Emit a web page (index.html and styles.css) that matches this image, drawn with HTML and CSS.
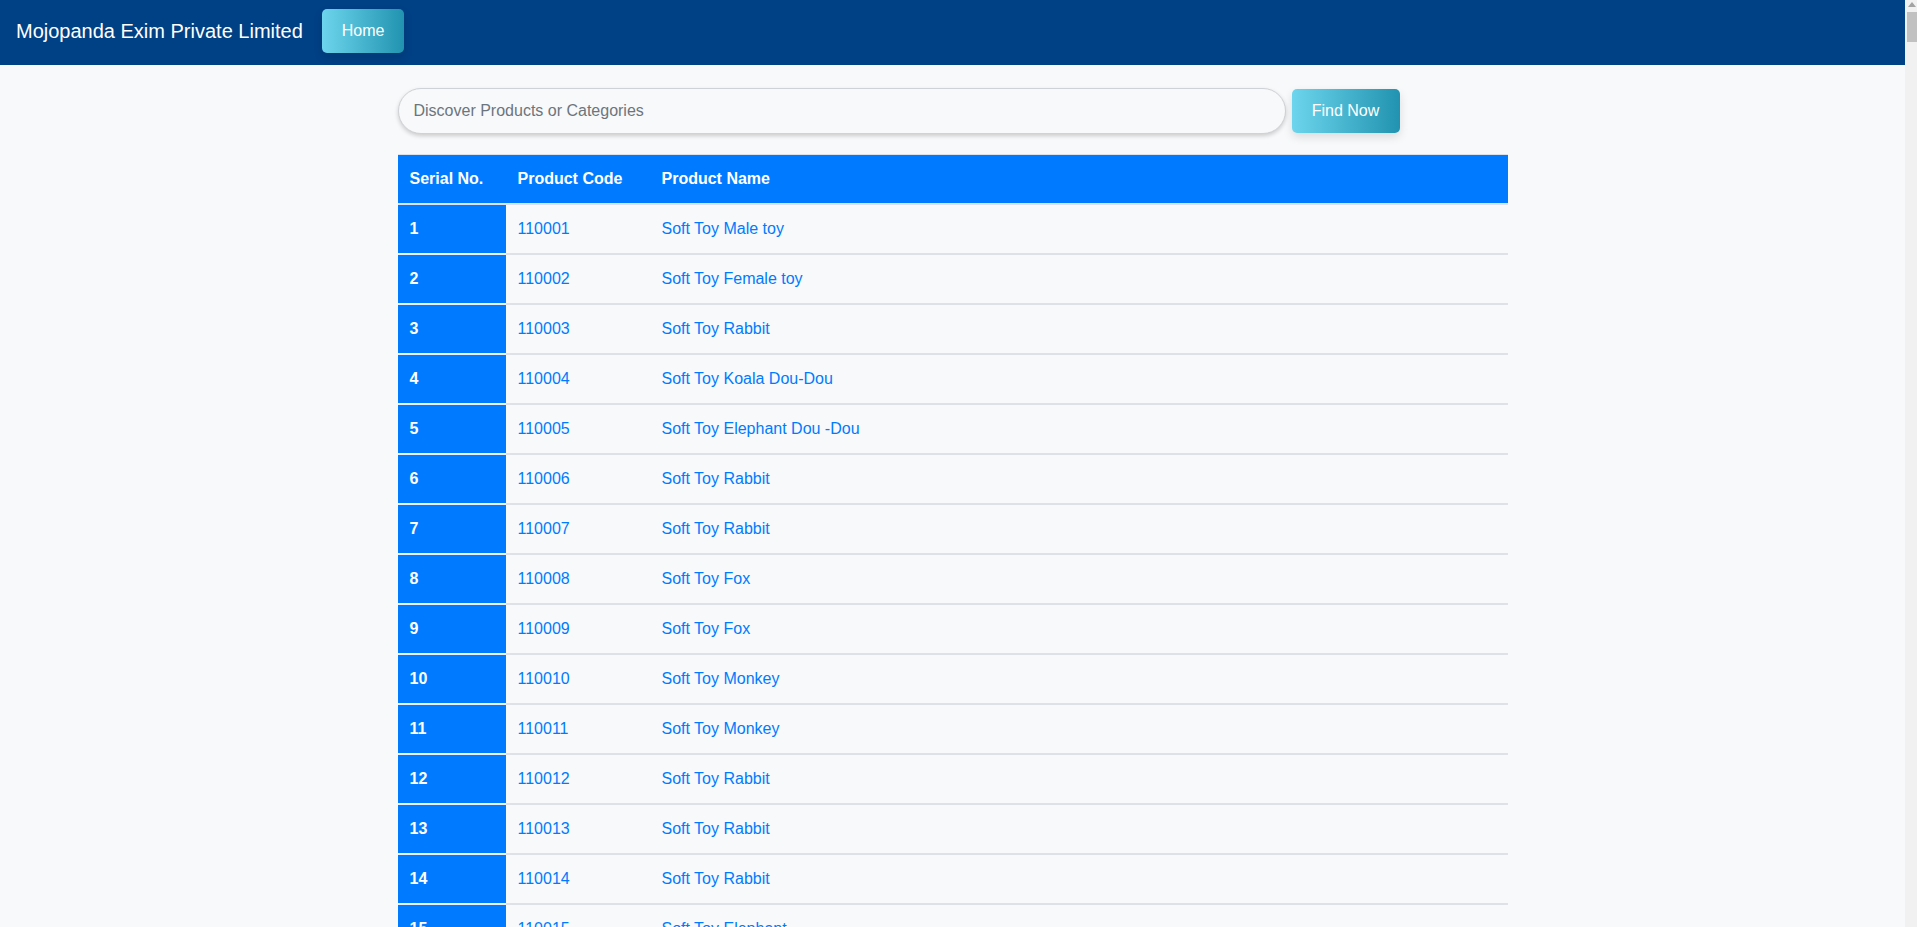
FILE: index.html
```html
<!DOCTYPE html>
<html lang="en">
<head>
<meta charset="utf-8">
<title>Mojopanda Exim Private Limited</title>
<link rel="stylesheet" href="styles.css">
</head>
<body>
<nav class="navbar">
  <span class="brand">Mojopanda Exim Private Limited</span>
  <a class="btn-grad nav-btn" href="#">Home</a>
</nav>
<main class="container">
  <form class="search">
    <input class="search-input" type="text" placeholder="Discover Products or Categories">
    <button class="btn-grad find-btn" type="button">Find Now</button>
  </form>
  <table class="products">
    <thead>
      <tr><th class="c-serial">Serial No.</th><th class="c-code">Product Code</th><th>Product Name</th></tr>
    </thead>
    <tbody>
      <tr><th class="serial">1</th><td>110001</td><td>Soft Toy Male toy</td></tr>
      <tr><th class="serial">2</th><td>110002</td><td>Soft Toy Female toy</td></tr>
      <tr><th class="serial">3</th><td>110003</td><td>Soft Toy Rabbit</td></tr>
      <tr><th class="serial">4</th><td>110004</td><td>Soft Toy Koala Dou-Dou</td></tr>
      <tr><th class="serial">5</th><td>110005</td><td>Soft Toy Elephant Dou -Dou</td></tr>
      <tr><th class="serial">6</th><td>110006</td><td>Soft Toy Rabbit</td></tr>
      <tr><th class="serial">7</th><td>110007</td><td>Soft Toy Rabbit</td></tr>
      <tr><th class="serial">8</th><td>110008</td><td>Soft Toy Fox</td></tr>
      <tr><th class="serial">9</th><td>110009</td><td>Soft Toy Fox</td></tr>
      <tr><th class="serial">10</th><td>110010</td><td>Soft Toy Monkey</td></tr>
      <tr><th class="serial">11</th><td>110011</td><td>Soft Toy Monkey</td></tr>
      <tr><th class="serial">12</th><td>110012</td><td>Soft Toy Rabbit</td></tr>
      <tr><th class="serial">13</th><td>110013</td><td>Soft Toy Rabbit</td></tr>
      <tr><th class="serial">14</th><td>110014</td><td>Soft Toy Rabbit</td></tr>
      <tr><th class="serial">15</th><td>110015</td><td>Soft Toy Elephant</td></tr>
      <tr><th class="serial">16</th><td>110016</td><td>Soft Toy Elephant</td></tr>
      <tr><th class="serial">17</th><td>110017</td><td>Soft Toy Bear</td></tr>
      <tr><th class="serial">18</th><td>110018</td><td>Soft Toy Bear</td></tr>
      <tr><th class="serial">19</th><td>110019</td><td>Soft Toy Dog</td></tr>
      <tr><th class="serial">20</th><td>110020</td><td>Soft Toy Dog</td></tr>
    </tbody>
  </table>
</main>
<div class="fake-scrollbar" aria-hidden="true">
  <span class="sb-arrow"></span>
  <span class="sb-thumb"></span>
</div>
</body>
</html>
```

FILE: styles.css
```css
* { box-sizing: border-box; }

html, body {
  margin: 0;
  padding: 0;
}

body {
  padding-right: 12px;
  background: #f8f9fa;
  font-family: "Liberation Sans", Arial, sans-serif;
  font-size: 16px;
  line-height: 24px;
  color: #212529;
}

/* window scrollbar as seen in the reference */
.fake-scrollbar {
  position: fixed;
  top: 0;
  right: 0;
  bottom: 0;
  width: 12px;
  background: #f1f1f1;
}

.sb-arrow {
  position: absolute;
  top: 2px;
  left: 3px;
  width: 0;
  height: 0;
  border-left: 4px solid transparent;
  border-right: 4px solid transparent;
  border-bottom: 5px solid #a3a3a3;
}

.sb-thumb {
  position: absolute;
  top: 12px;
  left: 2px;
  width: 10px;
  height: 30px;
  background: #c1c1c1;
}

.navbar {
  display: flex;
  align-items: center;
  height: 65px;
  padding: 9px 16px 12px;
  background: #004085;
}

.brand {
  color: #fff;
  font-size: 20px;
  line-height: 30px;
  margin-right: 19px;
}

.btn-grad {
  display: inline-block;
  height: 44px;
  padding: 10px 20px;
  border: 0;
  border-radius: 5px;
  background: linear-gradient(to right, #6dd5ed, #2193b0);
  color: #fff;
  font-family: "Liberation Sans", Arial, sans-serif;
  font-size: 16px;
  line-height: 24px;
  text-decoration: none;
  box-shadow: 0 4px 10px rgba(0, 0, 0, 0.12);
}

.nav-btn { width: 82px; text-align: center; }

.container {
  width: 1110px;
  margin: 0 auto;
}

.search {
  display: flex;
  gap: 6px;
  margin: 23px 0 20px;
}

.search-input {
  width: 888px;
  height: 46px;
  padding: 0 15px;
  border: 1px solid #cfd2d6;
  border-radius: 23px;
  background: #f8f9fa;
  font-family: "Liberation Sans", Arial, sans-serif;
  font-size: 16px;
  color: #495057;
  box-shadow: 0 2px 4px rgba(0, 0, 0, 0.18);
  outline: none;
}

.search-input::placeholder { color: #6c757d; }

.find-btn {
  width: 108px;
  margin-top: 1px;
  cursor: pointer;
}

.products {
  width: 100%;
  border-collapse: separate;
  border-spacing: 0;
}

.products th,
.products td {
  padding: 12px;
  text-align: left;
  vertical-align: top;
}

.products thead th {
  background: #007bff;
  color: #fff;
  font-weight: bold;
  border-top: 1px solid #dee2e6;
  border-bottom: 2px solid #dee2e6;
}

.c-serial { width: 108px; }
.c-code { width: 144px; }

.products tbody td {
  color: #007bff;
  border-bottom: 2px solid #dee2e6;
}

.products tbody th.serial {
  background: #007bff;
  color: #fff;
  font-weight: bold;
  border-bottom: 2px solid #eceef1;
}
```
